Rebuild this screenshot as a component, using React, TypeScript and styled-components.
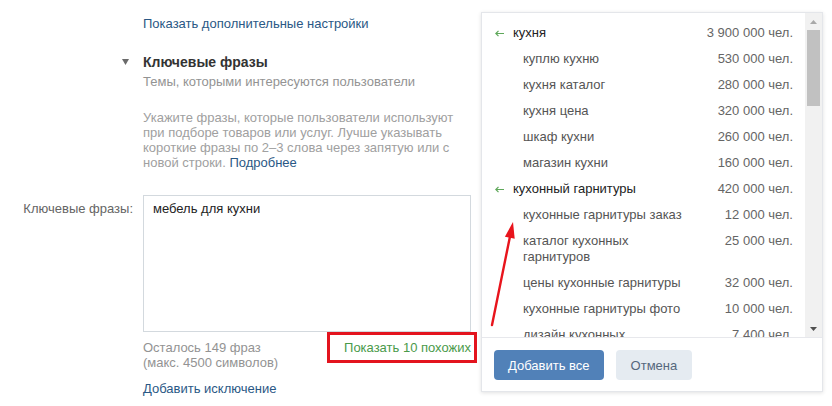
import React from 'react';
import styled, { createGlobalStyle } from 'styled-components';

type Suggestion = { name: string; count: string; main?: boolean };

const suggestions: Suggestion[] = [
  { name: 'кухня', count: '3 900 000 чел.', main: true },
  { name: 'куплю кухню', count: '530 000 чел.' },
  { name: 'кухня каталог', count: '280 000 чел.' },
  { name: 'кухня цена', count: '320 000 чел.' },
  { name: 'шкаф кухни', count: '260 000 чел.' },
  { name: 'магазин кухни', count: '160 000 чел.' },
  { name: 'кухонный гарнитуры', count: '420 000 чел.', main: true },
  { name: 'кухонные гарнитуры заказ', count: '12 000 чел.' },
  { name: 'каталог кухонных гарнитуров', count: '25 000 чел.' },
  { name: 'цены кухонные гарнитуры', count: '32 000 чел.' },
  { name: 'кухонные гарнитуры фото', count: '10 000 чел.' },
  { name: 'дизайн кухонных гарнитуров', count: '7 400 чел.' },
];

const App: React.FC = () => {
  return (
    <Page>
      <GlobalStyle />
      <Form>
        <Field $top={16}>
          <span />
          <Link>Показать дополнительные настройки</Link>
        </Field>

        <Field $top={21}>
          <Toggle>
            <svg width="7" height="6" viewBox="0 0 7 6">
              <path d="M0 0 H7 L3.5 6 Z" fill="#6b6b6b" />
            </svg>
          </Toggle>
          <div>
            <Heading>Ключевые фразы</Heading>
            <Subtitle>Темы, которыми интересуются пользователи</Subtitle>
            <Hint>
              Укажите фразы, которые пользователи используют при подборе товаров или услуг. Лучше
              указывать короткие фразы по 2–3 слова через запятую или с новой строки.{' '}
              <Link>Подробнее</Link>
            </Hint>
          </div>
        </Field>

        <Field $top={24}>
          <Label>Ключевые фразы:</Label>
          <div>
            <Phrases readOnly value="мебель для кухни" />
            <Counter>
              <CounterText>
                Осталось 149 фраз
                <br />
                (макс. 4500 символов)
              </CounterText>
              <Similar>Показать 10 похожих</Similar>
            </Counter>
            <Exception>Добавить исключение</Exception>
          </div>
        </Field>
      </Form>

      <Popup>
        <ListArea>
          <List>
            {suggestions.map((s) => (
              <Row key={s.name} $main={!!s.main}>
                {s.main && (
                  <Back>
                    <svg width="9" height="7" viewBox="0 0 9 7">
                      <path d="M9 3.5 H1 M3.5 0.8 L0.8 3.5 L3.5 6.2" stroke="#5fa85a" strokeWidth="1.2" fill="none" />
                    </svg>
                  </Back>
                )}
                <Name $main={!!s.main}>{s.name}</Name>
                <Count>{s.count}</Count>
              </Row>
            ))}
          </List>
          <Scrollbar>
            <ScrollArrow>
              <svg width="7" height="4" viewBox="0 0 7 4">
                <path d="M0 4 L3.5 0 L7 4 Z" fill="#a8a8a8" />
              </svg>
            </ScrollArrow>
            <Track>
              <Thumb />
            </Track>
            <ScrollArrow>
              <svg width="7" height="4" viewBox="0 0 7 4">
                <path d="M0 0 L3.5 4 L7 0 Z" fill="#505050" />
              </svg>
            </ScrollArrow>
          </Scrollbar>
        </ListArea>
        <Footer>
          <Button $primary>Добавить все</Button>
          <Button>Отмена</Button>
        </Footer>
      </Popup>

      <Pointer width="40" height="112" viewBox="0 0 40 112">
        <path d="M11 109 L29.5 18" stroke="#e8141c" strokeWidth="2.4" strokeLinecap="round" />
        <path d="M32 6 L23.9 20.7 L33.7 22.7 Z" fill="#e8141c" />
      </Pointer>
    </Page>
  );
};

const GlobalStyle = createGlobalStyle`
  html, body {
    margin: 0;
    background: #ffffff;
  }
  body {
    font-family: "Liberation Sans", Arial, sans-serif;
    font-size: 13px;
    color: #222222;
  }
`;

const Page = styled.div`
  position: relative;
  width: 832px;
  height: 406px;
  overflow: hidden;
  background: #ffffff;
`;

const Form = styled.div`
  width: 471px;
`;

const Field = styled.div<{ $top: number }>`
  display: grid;
  grid-template-columns: 133px 328px;
  column-gap: 10px;
  margin-top: ${(p) => p.$top}px;
`;

const Link = styled.a`
  color: #2a5885;
  line-height: 16px;
  cursor: pointer;
`;

const Toggle = styled.div`
  display: flex;
  justify-content: flex-end;
  padding-right: 4px;
  padding-top: 6px;
`;

const Heading = styled.div`
  font-size: 14px;
  font-weight: 700;
  line-height: 18px;
  color: #333333;
`;

const Subtitle = styled.div`
  margin-top: 3px;
  line-height: 16px;
  color: #939393;
`;

const Hint = styled.p`
  margin: 20px 0 0;
  line-height: 15px;
  color: #a0a0a0;
`;

const Label = styled.div`
  text-align: right;
  padding-top: 6px;
  line-height: 16px;
  color: #656565;
`;

const Phrases = styled.textarea`
  display: block;
  box-sizing: border-box;
  width: 328px;
  height: 137px;
  margin: 0;
  padding: 5px 9px;
  border: 1px solid #d3d9de;
  border-radius: 0;
  resize: none;
  outline: none;
  font-family: "Liberation Sans", Arial, sans-serif;
  font-size: 13px;
  line-height: 16px;
  color: #222222;
`;

const Counter = styled.div`
  display: flex;
  justify-content: space-between;
  align-items: flex-start;
  margin-top: 8px;
`;

const CounterText = styled.div`
  line-height: 15px;
  color: #939393;
`;

const Similar = styled.a`
  position: relative;
  line-height: 15px;
  color: #4a9a4a;
  cursor: pointer;

  &::after {
    content: '';
    position: absolute;
    left: -17px;
    right: -6px;
    top: -8px;
    bottom: -8px;
    border: 3px solid #e3141e;
  }
`;

const Exception = styled(Link)`
  display: block;
  margin-top: 11px;
`;

const Popup = styled.div`
  position: absolute;
  left: 481px;
  top: 12px;
  width: 342px;
  height: 380px;
  box-sizing: border-box;
  display: flex;
  flex-direction: column;
  background: #ffffff;
  border: 1px solid #e4e6ea;
  box-shadow: 0 1px 4px rgba(0, 0, 0, 0.12);
`;

const ListArea = styled.div`
  display: flex;
  height: 324px;
  overflow: hidden;
`;

const List = styled.div`
  flex: 1;
  padding-top: 7px;
`;

const Row = styled.div<{ $main: boolean }>`
  display: flex;
  align-items: flex-start;
  padding: 5px 12px 5px ${(p) => (p.$main ? 13 : 41)}px;
  line-height: 16px;
`;

const Back = styled.span`
  display: flex;
  align-items: center;
  width: 18px;
  height: 16px;
`;

const Name = styled.span<{ $main: boolean }>`
  width: 168px;
  color: ${(p) => (p.$main ? '#222222' : '#555555')};
`;

const Count = styled.span`
  margin-left: auto;
  white-space: nowrap;
  color: #656565;
`;

const Scrollbar = styled.div`
  display: flex;
  flex-direction: column;
  width: 17px;
  background: #f1f1f1;
`;

const ScrollArrow = styled.div`
  display: flex;
  align-items: center;
  justify-content: center;
  height: 17px;
`;

const Track = styled.div`
  flex: 1;
  padding: 0 2px;
`;

const Thumb = styled.div`
  height: 76px;
  background: #c1c1c1;
`;

const Footer = styled.div`
  display: flex;
  gap: 12px;
  padding: 12px 12px 0;
  border-top: 1px solid #e7e8ec;
`;

const Button = styled.button<{ $primary?: boolean }>`
  height: 30px;
  padding: 0 ${(p) => (p.$primary ? 14 : 15)}px;
  border: none;
  border-radius: 4px;
  font-family: "Liberation Sans", Arial, sans-serif;
  font-size: 13px;
  background: ${(p) => (p.$primary ? '#5181b8' : '#e5ebf1')};
  color: ${(p) => (p.$primary ? '#ffffff' : '#55677d')};
  cursor: pointer;
`;

const Pointer = styled.svg`
  position: absolute;
  left: 481px;
  top: 216px;
`;

export default App;
